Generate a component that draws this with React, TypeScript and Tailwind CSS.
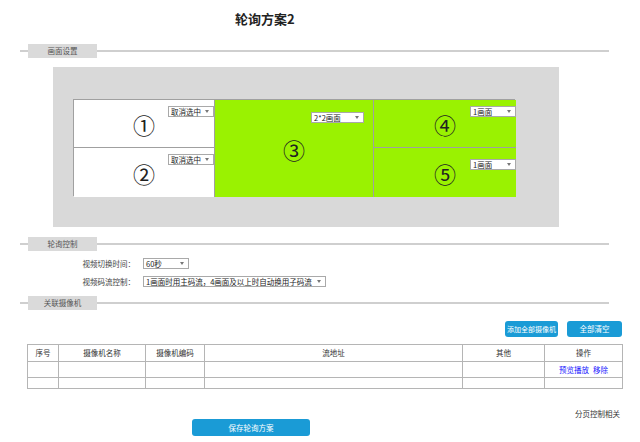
import React from "react";

function SectionHeader({ label }: { label: string }) {
  return (
    <div className="ml-[20px] flex h-[14px] w-[589px] items-center">
      <div className="h-[2px] w-[8px] bg-[#cfcfcf]" />
      <div className="flex h-[14px] w-[69px] items-center justify-center bg-[#dadada] text-[7.5px] text-[#555]">
        {label}
      </div>
      <div className="h-[2px] flex-1 bg-[#cfcfcf]" />
    </div>
  );
}

function Sel({ text, className }: { text: string; className: string }) {
  return (
    <div
      className={`flex h-[11px] items-center justify-between border border-[#a9a9a9] bg-white pl-[2px] pr-[4px] text-[7.5px] leading-none text-[#222] ${className}`}
    >
      <span>{text}</span>
      <span className="h-0 w-0 border-x-[2.5px] border-t-[3px] border-x-transparent border-t-[#777]" />
    </div>
  );
}

function Cell({
  num,
  sel,
  green,
  selClass,
  className,
}: {
  num: string;
  sel: string;
  green?: boolean;
  selClass: string;
  className: string;
}) {
  return (
    <div
      className={`relative flex items-center justify-center border-[#a0a0a0] ${green ? "bg-[#9af201]" : "bg-white"} ${className}`}
    >
      <span className="text-[22px] leading-none text-[#222]">{num}</span>
      <Sel text={sel} className={`absolute ${selClass}`} />
    </div>
  );
}

export default function App() {
  return (
    <div className="h-[442px] w-[640px] overflow-hidden bg-white font-['Noto_Sans_CJK_SC',sans-serif] text-[#333]">
      <div className="pl-[235px] pt-[11px] text-[13px] font-bold leading-[16px] text-[#222]">轮询方案2</div>

      <div className="mt-[17px]">
        <SectionHeader label="画面设置" />
      </div>

      {/* layout canvas */}
      <div className="ml-[53px] mt-[9px] h-[160px] w-[506px] bg-[#d9d9d9] pl-[20px] pt-[32px]">
        <div className="grid h-[97px] w-[442px] grid-cols-[141px_159px_142px] grid-rows-[48px_49px] border border-[#a0a0a0]">
          <Cell num="①" sel="取消选中" selClass="right-0 top-[6px] w-[46px]" className="border-b border-r" />
          <Cell
            num="③"
            sel="2*2画面"
            green
            selClass="right-[9px] top-[12px] w-[53px]"
            className="row-span-2 border-r"
          />
          <Cell num="④" sel="1画面" green selClass="right-0 top-[6px] w-[46px]" className="border-b" />
          <Cell num="②" sel="取消选中" selClass="right-0 top-[6px] w-[46px]" className="border-r" />
          <Cell num="⑤" sel="1画面" green selClass="right-0 top-[11px] w-[46px]" className="" />
        </div>
      </div>

      <div className="mt-[10px]">
        <SectionHeader label="轮询控制" />
      </div>

      <div className="mt-[7px] flex flex-col gap-[7px] text-[7.5px] text-[#444]">
        <div className="flex h-[11px] items-center">
          <div className="w-[135px] text-right">视频切换时间：</div>
          <Sel text="60秒" className="ml-[8px] w-[46px]" />
        </div>
        <div className="flex h-[11px] items-center">
          <div className="w-[135px] text-right">视频码流控制：</div>
          <Sel text="1画面时用主码流，4画面及以上时自动换用子码流" className="ml-[8px] w-[183px]" />
        </div>
      </div>

      <div className="mt-[9px]">
        <SectionHeader label="关联摄像机" />
      </div>

      <div className="ml-[27px] mt-[11px] flex w-[595px] justify-end gap-[9px] text-white">
        <button className="h-[16px] w-[53px] rounded-[3px] bg-[#1a9bd6] text-[7px]">添加全部摄像机</button>
        <button className="h-[16px] w-[55px] rounded-[3px] bg-[#1a9bd6] text-[7.5px]">全部清空</button>
      </div>

      <table className="ml-[27px] mt-[7px] w-[595px] table-fixed border-collapse border border-[#b5b5b5] text-[7.5px] text-[#333]">
        <colgroup>
          <col className="w-[31px]" />
          <col className="w-[87px]" />
          <col className="w-[59px]" />
          <col className="w-[258px]" />
          <col className="w-[82px]" />
          <col className="w-[78px]" />
        </colgroup>
        <tbody>
          <tr className="h-[17px]">
            {["序号", "摄像机名称", "摄像机编码", "流地址", "其他", "操作"].map((h) => (
              <td key={h} className="border border-[#b5b5b5] p-0 text-center font-normal">
                {h}
              </td>
            ))}
          </tr>
          <tr className="h-[16px]">
            <td className="border border-[#b5b5b5] p-0" />
            <td className="border border-[#b5b5b5] p-0" />
            <td className="border border-[#b5b5b5] p-0" />
            <td className="border border-[#b5b5b5] p-0" />
            <td className="border border-[#b5b5b5] p-0" />
            <td className="border border-[#b5b5b5] p-0 text-center text-[#1a1aff]">
              预览播放<span className="ml-[4px]">移除</span>
            </td>
          </tr>
          <tr className="h-[11px]">
            <td className="border border-[#b5b5b5] p-0" />
            <td className="border border-[#b5b5b5] p-0" />
            <td className="border border-[#b5b5b5] p-0" />
            <td className="border border-[#b5b5b5] p-0" />
            <td className="border border-[#b5b5b5] p-0" />
            <td className="border border-[#b5b5b5] p-0" />
          </tr>
        </tbody>
      </table>

      <div className="mt-[20px] h-[10px] pr-[20px] text-right text-[7.5px] leading-[10px] text-[#333]">分页控制相关</div>

      <button className="ml-[192px] block h-[17px] w-[118px] rounded-[3px] bg-[#1a9bd6] text-[7.5px] text-white">
        保存轮询方案
      </button>
    </div>
  );
}
